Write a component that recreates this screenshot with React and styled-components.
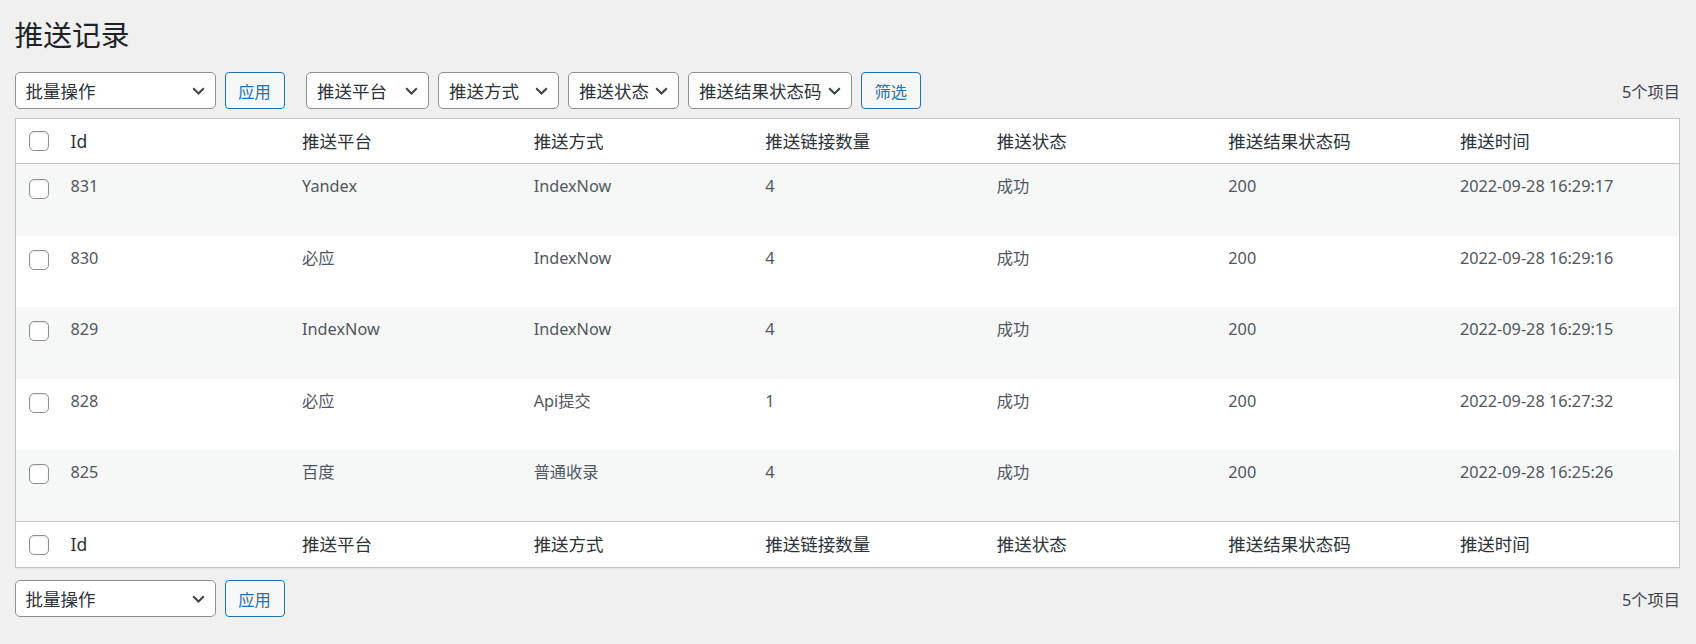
import styled, { createGlobalStyle } from "styled-components";

const GlobalStyle = createGlobalStyle`
    html, body {
        margin: 0;
        padding: 0;
        background: #f0f0f1;
        min-height: 100%;
    }
    body {
        font-family: "Noto Sans", "Noto Sans CJK SC", sans-serif;
        color: #3c434a;
    }
    * {
        box-sizing: border-box;
    }
`;

const Wrap = styled.div`
    padding: 0 16px 20px 14.5px;
`;

const Title = styled.h1`
    margin: 0;
    padding-top: 16px;
    font-size: 28.75px;
    font-weight: 400;
    line-height: 1.3;
    color: #1d2327;
`;

const TableNav = styled.div`
    display: flex;
    align-items: center;
    justify-content: space-between;
    height: 37px;
    margin-top: ${(p) => (p.bottom ? "12.5px" : "19px")};
`;

const Actions = styled.div`
    display: flex;
    align-items: center;
`;

const Group = styled.div`
    display: flex;
    align-items: center;
    gap: 9px;
    margin-right: ${(p) => p.mr || 0}px;
`;

const Select = styled.div`
    display: flex;
    align-items: center;
    justify-content: space-between;
    width: ${(p) => p.w}px;
    height: 37px;
    padding: 0 10px 0 10px;
    border: 1px solid #8c8f94;
    border-radius: 5px;
    background: #fff;
    font-size: 17.5px;
    color: #2c3338;
    white-space: nowrap;
    cursor: pointer;
`;

const Chevron = styled.svg`
    flex: none;
    width: 13px;
    height: 8px;
    margin-left: 6px;
`;

const Button = styled.button`
    width: ${(p) => (p.w ? `${p.w}px` : "auto")};
    height: 37px;
    padding: 0 12.5px;
    border: 1px solid #2271b1;
    border-radius: 4px;
    background: #f6f7f7;
    color: #2271b1;
    font-family: inherit;
    font-size: 16.25px;
    cursor: pointer;
`;

const Count = styled.span`
    font-size: 16.25px;
    color: #3c434a;
`;

const Table = styled.table`
    width: 100%;
    margin-top: 8.5px;
    table-layout: fixed;
    border-collapse: separate;
    border-spacing: 0;
    border: 1px solid #c3c4c7;
    background: #fff;
    box-shadow: 0 1px 1px rgba(0, 0, 0, 0.04);
`;

const HeadCell = styled.th`
    padding: 10px 12.5px;
    font-size: 17.5px;
    font-weight: 400;
    line-height: 24.5px;
    text-align: left;
    color: #2c3338;
    border-bottom: ${(p) => (p.foot ? "none" : "1px solid #c3c4c7")};
    border-top: ${(p) => (p.foot ? "1px solid #c3c4c7" : "none")};
    vertical-align: middle;
`;

const CheckHead = styled(HeadCell)`
    padding: 0 0 0 13px;
`;

const Row = styled.tr`
    height: 71.4px;
    background: ${(p) => (p.striped ? "#f6f7f7" : "#fff")};
`;

const Cell = styled.td`
    padding: 10px 12.5px;
    font-size: 16.25px;
    line-height: 24.4px;
    color: #50575e;
    vertical-align: top;
`;

const CheckCell = styled.td`
    padding: 14.2px 0 0 13px;
    vertical-align: top;
`;

const Checkbox = styled.span`
    display: block;
    width: 20px;
    height: 20px;
    border: 1px solid #8c8f94;
    border-radius: 5px;
    background: #fff;
    box-shadow: inset 0 1px 2px rgba(0, 0, 0, 0.1);
`;

const columns = ["Id", "推送平台", "推送方式", "推送链接数量", "推送状态", "推送结果状态码", "推送时间"];

const rows = [
    ["831", "Yandex", "IndexNow", "4", "成功", "200", "2022-09-28 16:29:17"],
    ["830", "必应", "IndexNow", "4", "成功", "200", "2022-09-28 16:29:16"],
    ["829", "IndexNow", "IndexNow", "4", "成功", "200", "2022-09-28 16:29:15"],
    ["828", "必应", "Api提交", "1", "成功", "200", "2022-09-28 16:27:32"],
    ["825", "百度", "普通收录", "4", "成功", "200", "2022-09-28 16:25:26"],
];

const Dropdown = ({ label, w }) => (
    <Select w={w}>
        <span>{label}</span>
        <Chevron viewBox="0 0 13 8">
            <path d="M1.2 1.2 L6.5 6.5 L11.8 1.2" fill="none" stroke="#3c434a" strokeWidth="2" />
        </Chevron>
    </Select>
);

const HeaderRow = ({ foot }) => (
    <tr>
        <CheckHead foot={foot}>
            <Checkbox />
        </CheckHead>
        {columns.map((c) => (
            <HeadCell key={c} foot={foot}>
                {c}
            </HeadCell>
        ))}
    </tr>
);

const App = () => {
    return (
        <Wrap>
            <GlobalStyle />
            <Title>推送记录</Title>
            <TableNav>
                <Actions>
                    <Group mr={21.5}>
                        <Dropdown label="批量操作" w={201} />
                        <Button w={60}>应用</Button>
                    </Group>
                    <Group>
                        <Dropdown label="推送平台" w={123} />
                        <Dropdown label="推送方式" w={121} />
                        <Dropdown label="推送状态" w={111} />
                        <Dropdown label="推送结果状态码" w={164} />
                        <Button>筛选</Button>
                    </Group>
                </Actions>
                <Count>5个项目</Count>
            </TableNav>
            <Table>
                <colgroup>
                    <col style={{ width: 42.5 }} />
                    {columns.map((c) => (
                        <col key={c} />
                    ))}
                </colgroup>
                <thead>
                    <HeaderRow />
                </thead>
                <tbody>
                    {rows.map((r, i) => (
                        <Row key={r[0]} striped={i % 2 === 0}>
                            <CheckCell>
                                <Checkbox />
                            </CheckCell>
                            {r.map((v, j) => (
                                <Cell key={j}>{v}</Cell>
                            ))}
                        </Row>
                    ))}
                </tbody>
                <tfoot>
                    <HeaderRow foot />
                </tfoot>
            </Table>
            <TableNav bottom>
                <Actions>
                    <Group>
                        <Dropdown label="批量操作" w={201} />
                        <Button w={60}>应用</Button>
                    </Group>
                </Actions>
                <Count>5个项目</Count>
            </TableNav>
        </Wrap>
    );
};

export default App;
